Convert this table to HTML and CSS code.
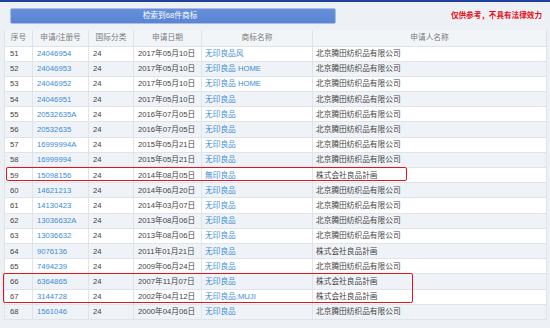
FILE: index.html
```html
<!DOCTYPE html>
<html lang="zh-CN">
<head>
<meta charset="utf-8">
<title>检索结果</title>
<link rel="stylesheet" href="styles.css">
</head>
<body>
<div class="topline"></div>
<div class="toolbar">
  <div class="count-btn">检索到68件商标</div>
  <div class="note">仅供参考，不具有法律效力</div>
</div>
<div class="results">
  <table class="tm-table">
    <colgroup>
      <col class="c-no"><col class="c-reg"><col class="c-cls"><col class="c-date"><col class="c-name"><col class="c-owner">
    </colgroup>
    <thead>
      <tr><th>序号</th><th>申请/注册号</th><th>国际分类</th><th>申请日期</th><th>商标名称</th><th>申请人名称</th></tr>
    </thead>
    <tbody>
      <tr><td>51</td><td class="link">24046954</td><td>24</td><td>2017年05月10日</td><td class="link">无印良品风</td><td>北京腾田纺织品有限公司</td></tr>
      <tr><td>52</td><td class="link">24046953</td><td>24</td><td>2017年05月10日</td><td class="link">无印良品 HOME</td><td>北京腾田纺织品有限公司</td></tr>
      <tr><td>53</td><td class="link">24046952</td><td>24</td><td>2017年05月10日</td><td class="link">无印良品 HOME</td><td>北京腾田纺织品有限公司</td></tr>
      <tr><td>54</td><td class="link">24046951</td><td>24</td><td>2017年05月10日</td><td class="link">无印良品</td><td>北京腾田纺织品有限公司</td></tr>
      <tr><td>55</td><td class="link">20532635A</td><td>24</td><td>2016年07月05日</td><td class="link">无印良品</td><td>北京腾田纺织品有限公司</td></tr>
      <tr><td>56</td><td class="link">20532635</td><td>24</td><td>2016年07月05日</td><td class="link">无印良品</td><td>北京腾田纺织品有限公司</td></tr>
      <tr><td>57</td><td class="link">16999994A</td><td>24</td><td>2015年05月21日</td><td class="link">无印良品</td><td>北京腾田纺织品有限公司</td></tr>
      <tr><td>58</td><td class="link">16999994</td><td>24</td><td>2015年05月21日</td><td class="link">无印良品</td><td>北京腾田纺织品有限公司</td></tr>
      <tr><td>59</td><td class="link">15098156</td><td>24</td><td>2014年08月05日</td><td class="link">無印良品</td><td>株式会社良品計画</td></tr>
      <tr><td>60</td><td class="link">14621213</td><td>24</td><td>2014年06月20日</td><td class="link">无印良品</td><td>北京腾田纺织品有限公司</td></tr>
      <tr><td>61</td><td class="link">14130423</td><td>24</td><td>2014年03月07日</td><td class="link">无印良品</td><td>北京腾田纺织品有限公司</td></tr>
      <tr><td>62</td><td class="link">13036632A</td><td>24</td><td>2013年08月06日</td><td class="link">无印良品</td><td>北京腾田纺织品有限公司</td></tr>
      <tr><td>63</td><td class="link">13036632</td><td>24</td><td>2013年08月06日</td><td class="link">无印良品</td><td>北京腾田纺织品有限公司</td></tr>
      <tr><td>64</td><td class="link">9076136</td><td>24</td><td>2011年01月21日</td><td class="link">无印良品</td><td>株式会社良品計画</td></tr>
      <tr><td>65</td><td class="link">7494239</td><td>24</td><td>2009年06月24日</td><td class="link">无印良品</td><td>北京腾田纺织品有限公司</td></tr>
      <tr><td>66</td><td class="link">6364865</td><td>24</td><td>2007年11月07日</td><td class="link">无印良品</td><td>株式会社良品計画</td></tr>
      <tr><td>67</td><td class="link">3144728</td><td>24</td><td>2002年04月12日</td><td class="link">无印良品;MUJI</td><td>株式会社良品計画</td></tr>
      <tr><td>68</td><td class="link">1561046</td><td>24</td><td>2000年04月06日</td><td class="link">无印良品</td><td>北京腾田纺织品有限公司</td></tr>
    </tbody>
  </table>
  <div class="mark mark-one"></div>
  <div class="mark mark-two"></div>
</div>
</body>
</html>
```

FILE: styles.css
```css
html, body {
  margin: 0;
  padding: 0;
}

body {
  background: #edf1f6;
  font-family: "Liberation Sans", "Noto Sans CJK SC", sans-serif;
  color: #444;
  width: 550px;
  height: 328px;
  overflow: hidden;
}

.topline {
  height: 2px;
  background: #1f3f9c;
}

.toolbar {
  display: flex;
  align-items: center;
  justify-content: space-between;
  padding: 6px 8px 0 10px;
  height: 22px;
  box-sizing: border-box;
}

.count-btn {
  width: 326px;
  height: 16px;
  box-sizing: border-box;
  border: 1px solid #a9bde8;
  border-radius: 2px;
  background: linear-gradient(#6790db, #5a83d2);
  color: #fff;
  font-size: 7.7px;
  line-height: 14px;
  text-align: center;
  padding-right: 6px;
}

.note {
  color: #e60f18;
  font-size: 7.6px;
  font-weight: bold;
  line-height: 10px;
}

.results {
  position: relative;
  margin: 6px 0 0 4px;
  width: 542px;
}

.tm-table {
  width: 542px;
  border-collapse: collapse;
  table-layout: fixed;
  font-size: 7.7px;
}

.c-no { width: 28px; }
.c-reg { width: 56px; }
.c-cls { width: 45px; }
.c-date { width: 68px; }
.c-name { width: 111px; }
.c-owner { width: 234px; }

.tm-table th {
  height: 15.5px;
  padding: 0;
  font-weight: normal;
  color: #7a7a7a;
  text-align: center;
  background: #f2f5f8;
  border: 1px solid #dde3e9;
  border-top: none;
  white-space: nowrap;
  line-height: 13px;
}

.tm-table td {
  height: 15.2px;
  padding: 0 4px;
  border: 1px solid #dfe4ea;
  border-top: none;
  white-space: nowrap;
  overflow: hidden;
  line-height: 13px;
  box-sizing: border-box;
}

.tm-table td:first-child {
  padding-left: 5px;
}

.tm-table td:nth-child(5),
.tm-table td:nth-child(6) {
  padding-left: 3px;
}

.tm-table tbody tr:nth-child(odd) td {
  background: #ffffff;
}

.tm-table tbody tr:nth-child(even) td {
  background: #eff3f7;
}

.tm-table td.link {
  color: #3a8cd6;
}

.mark {
  position: absolute;
  border: 1.5px solid #e3141c;
  border-radius: 2px;
  box-sizing: border-box;
}

.mark-one {
  left: 1.5px;
  top: 136.7px;
  width: 401.5px;
  height: 14.3px;
}

.mark-two {
  left: -0.7px;
  top: 242.5px;
  width: 409.7px;
  height: 30.8px;
}
```
